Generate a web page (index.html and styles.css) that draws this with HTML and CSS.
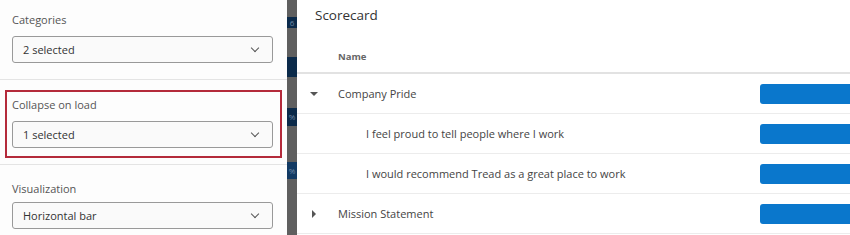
FILE: index.html
```html
<!DOCTYPE html>
<html lang="en">
<head>
    <meta charset="UTF-8">
    <title>Scorecard settings</title>
    <link rel="stylesheet" href="styles.css">
</head>
<body>
    <div class="layout">
        <div class="sidebar">
            <div class="field">
                <div class="field-label">Categories</div>
                <div class="select">2 selected <span class="chev"></span></div>
            </div>
            <div class="field highlight">
                <div class="field-label">Collapse on load</div>
                <div class="select">1 selected <span class="chev"></span></div>
            </div>
            <div class="field last">
                <div class="field-label">Visualization</div>
                <div class="select">Horizontal bar <span class="chev"></span></div>
            </div>
        </div>

        <div class="backdrop">
            <div class="peek p1">6</div>
            <div class="peek p2"></div>
            <div class="peek p3">%</div>
            <div class="peek p4 light">%</div>
        </div>

        <div class="main">
            <h2>Scorecard</h2>
            <div class="table">
                <div class="row head"><span class="name">Name</span></div>
                <div class="row">
                    <span class="caret down"></span>
                    <span class="name">Company Pride</span>
                    <span class="bar"></span>
                </div>
                <div class="row">
                    <span class="name sub">I feel proud to tell people where I work</span>
                    <span class="bar"></span>
                </div>
                <div class="row">
                    <span class="name sub">I would recommend Tread as a great place to work</span>
                    <span class="bar"></span>
                </div>
                <div class="row">
                    <span class="caret right"></span>
                    <span class="name">Mission Statement</span>
                    <span class="bar"></span>
                </div>
            </div>
        </div>
    </div>
</body>
</html>
```

FILE: styles.css
```css
body {
    margin: 0;
    font-family: 'Open Sans', sans-serif;
    color: #333;
    background: #fff;
    overflow: hidden;
}
.layout {
    display: flex;
    height: 235px;
}
.sidebar {
    width: 287px;
    flex: none;
    background: #fdfdfd;
}
.field {
    padding: 12px 14px 16px 12px;
    border-bottom: 1px solid #e4e4e4;
}
.field.last {
    border-bottom: none;
    padding-top: 17px;
}
.field.last .field-label {
    margin-bottom: 5px;
}
.field-label {
    font-size: 11px;
    line-height: 16px;
    color: #555;
    margin-bottom: 8px;
}
.field.highlight {
    margin: 10px 5px 6px 5px;
    padding: 5px 7px 8px 5px;
    border: 2px solid #b42a3b;
    position: relative;
}
.field.highlight::after {
    content: "";
    position: absolute;
    left: -7px;
    right: -8px;
    bottom: -9px;
    border-bottom: 1px solid #e4e4e4;
}
.select {
    display: flex;
    align-items: center;
    justify-content: space-between;
    height: 25px;
    padding: 0 10px;
    border: 1px solid #999;
    border-radius: 3px;
    background: #fafafa;
    font-size: 11px;
    color: #333;
}
.chev {
    width: 5px;
    height: 5px;
    border-right: 1.3px solid #555;
    border-bottom: 1.3px solid #555;
    transform: rotate(45deg);
    margin: 0 4px 4px 0;
}
.backdrop {
    width: 10px;
    flex: none;
    background: #5f5f5f;
    position: relative;
    overflow: hidden;
}
.peek {
    position: absolute;
    left: 0;
    width: 10px;
    background: #0b2a4a;
    color: #6f89a5;
    font-size: 8px;
    line-height: 17px;
    text-align: center;
}
.p1 { top: 17px; height: 11px; line-height: 11px; }
.p2 { top: 57px; height: 20px; }
.p3 { top: 108px; height: 18px; }
.p4 { top: 162px; height: 17px; background: #123a63; }
.main {
    flex: 1;
    min-width: 0;
    overflow: hidden;
}
.main h2 {
    font-size: 13.5px;
    font-weight: normal;
    margin: 4px 0 0 18px;
    color: #333;
    line-height: 22px;
}
.table {
    margin-top: 13px;
}
.row {
    display: flex;
    align-items: center;
    height: 39px;
    border-bottom: 1px solid #ececec;
    font-size: 11px;
    position: relative;
}
.row.head {
    height: 33px;
    border-bottom: 2px solid #e2e2e2;
    font-size: 9.5px;
    font-weight: bold;
    color: #666;
}
.name {
    margin-left: 41px;
    color: #444;
    white-space: nowrap;
}
.head .name {
    color: #666;
    margin-top: 2px;
}
.name.sub {
    margin-left: 69px;
}
.caret {
    position: absolute;
    left: 13px;
    width: 0;
    height: 0;
}
.caret.down {
    border-left: 4px solid transparent;
    border-right: 4px solid transparent;
    border-top: 4px solid #555;
}
.caret.right {
    left: 15px;
    border-top: 4px solid transparent;
    border-bottom: 4px solid transparent;
    border-left: 4px solid #555;
}
.bar {
    position: absolute;
    left: 463px;
    width: 120px;
    height: 20px;
    background: #0a77cc;
    border-radius: 3px;
}
```
